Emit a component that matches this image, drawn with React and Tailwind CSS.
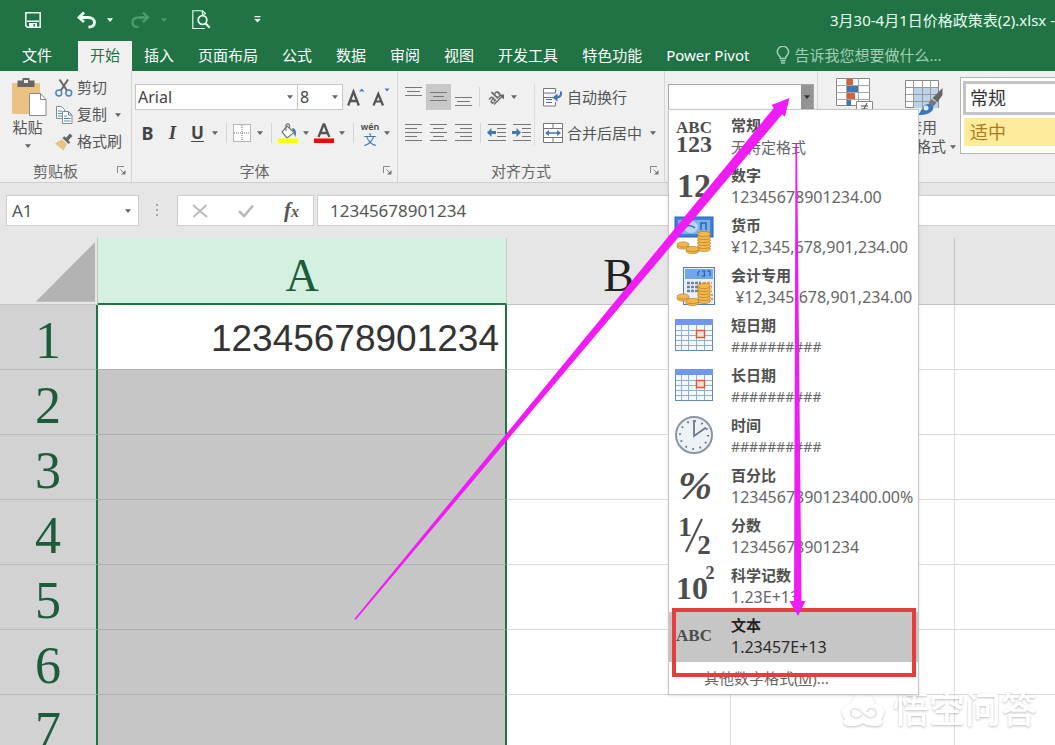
import React from "react";

const MAGENTA = "#f01cf5";

function Caret({ className = "text-[#666]" }) {
  return (
    <svg viewBox="0 0 8 5" className={"h-[4px] w-[6px] shrink-0 " + className} aria-hidden="true">
      <path d="M0 0h8L4 5z" fill="currentColor" />
    </svg>
  );
}

function CaretButton({ label, className = "w-2" }) {
  return (
    <button type="button" aria-label={label} className={"flex h-[26px] shrink-0 items-center justify-center " + className}>
      <Caret />
    </button>
  );
}

function Sep({ className = "w-3" }) {
  return (
    <span className={"flex h-5 shrink-0 justify-center " + className}>
      <span className="w-px bg-[#d4d4d4]" />
    </span>
  );
}

function TitleBar() {
  return (
    <header className="flex h-[41px] shrink-0 items-center justify-between bg-[#217346] pb-[2px] text-[#e9fff3]">
      <div className="flex items-center pl-[25px]">
        <button type="button" aria-label="保存">
          <svg viewBox="0 0 16 16" className="h-4 w-4" aria-hidden="true">
            <path d="M.8.8h14.400v14.400H2.300L.8 13.700z" fill="none" stroke="currentColor" strokeWidth="1.600" />
            <path d="M2 8.500h12v1.500H2zM4 11h8v4.500h-2V12H8.500v3.500H4z" fill="currentColor" />
          </svg>
        </button>
        <button type="button" aria-label="撤消" className="ml-9">
          <svg viewBox="0 0 19 18" className="h-[18px] w-[19px]" aria-hidden="true">
            <path d="M7 1.500 2 6.500l5 4.500M2.500 6.500H11c4 0 6.500 2 6.500 5s-2.500 4.500-6 4.500" fill="none" stroke="currentColor" strokeWidth="2.800" />
          </svg>
        </button>
        <button type="button" aria-label="撤消选项" className="ml-[11px]"><Caret className="text-white" /></button>
        <button type="button" aria-label="恢复" className="ml-[18px] text-[#4d9a6f]">
          <svg viewBox="0 0 19 18" className="h-[18px] w-[19px]" aria-hidden="true">
            <path d="m12 1.500 5 5-5 4.500M16.500 6.500H8c-4 0-6.500 2-6.500 5S4 16 7.500 16" fill="none" stroke="currentColor" strokeWidth="2.400" />
          </svg>
        </button>
        <button type="button" aria-label="恢复选项" className="ml-[11px]"><Caret className="text-[#4d9a6f]" /></button>
        <button type="button" aria-label="打印预览" className="ml-[25px]">
          <svg viewBox="0 0 19 20" className="h-5 w-[19px]" aria-hidden="true">
            <path d="M13.500 4V3.500L10.500.8H.8v17.700h12M10.300.8v3.500h3" fill="none" stroke="currentColor" strokeWidth="1.100" />
            <circle cx="10.500" cy="10" r="4.300" fill="none" stroke="currentColor" strokeWidth="1.700" />
            <path d="m13.500 13.300 4.200 4.500" stroke="currentColor" strokeWidth="2.200" />
          </svg>
        </button>
        <button type="button" aria-label="自定义快速访问工具栏" className="ml-[43px]">
          <svg viewBox="0 0 7 7" className="h-[7px] w-[7px]" aria-hidden="true">
            <path d="M.5 0h6v1.200h-6zM.2 3h6.600L3.500 6.500z" fill="currentColor" />
          </svg>
        </button>
      </div>
      <h1 className="whitespace-nowrap text-[15px] leading-6">3月30-4月1日价格政策表(2).xlsx -</h1>
    </header>
  );
}

const TABS = ["插入", "页面布局", "公式", "数据", "审阅", "视图", "开发工具", "特色功能", "Power Pivot"];

function Tabs() {
  return (
    <nav className="flex h-[30px] shrink-0 items-stretch bg-[#217346] text-[15px] leading-[26px] text-white">
      <button type="button" className="w-[78px] pb-[2px] pr-1 text-center">文件</button>
      <button type="button" className="bg-[#f0f0f0] px-3 pb-[2px] text-[#217346]">开始</button>
      {TABS.map((t) => (
        <button type="button" key={t} className="whitespace-nowrap px-3 pb-[2px]">{t}</button>
      ))}
      <button type="button" className="flex items-center gap-1 whitespace-nowrap pb-[2px] pl-[15px] text-[#a3cdb5]">
        <svg viewBox="0 0 14 18" className="h-[18px] w-[14px]" aria-hidden="true">
          <path d="M4.500 12.500c0-2.500-3.200-3.500-3.200-6.500a5.600 5.600 0 0 1 11.300 0c0 3-3.200 4-3.200 6.500zM4.500 14.800h5M5 17h4" fill="none" stroke="currentColor" strokeWidth="1.500" />
        </svg>
        告诉我您想要做什么...
      </button>
    </nav>
  );
}

function Group({ label, className, children }) {
  return (
    <section className={"flex shrink-0 flex-col justify-between " + className}>
      {children}
      <footer className="flex h-[23px] items-center">
        <span className="flex-1 text-center text-[15px] leading-[22px] text-[#666]">{label}</span>
        <button type="button" aria-label={label + "设置"} className="flex w-5 justify-center">
          <svg viewBox="0 0 9 9" className="h-[9px] w-[9px]" aria-hidden="true">
            <path d="M.5 7V.5H7M3.500 3.500 7.500 7.500" fill="none" stroke="#888" />
            <path d="M8.500 4v4.500H4z" fill="#777" />
          </svg>
        </button>
      </footer>
    </section>
  );
}

function ClipboardGroup() {
  return (
    <Group label="剪贴板" className="w-[132px] border-r border-[#d6d6d6]">
      <div className="flex pt-[3px] text-[15px] text-[#555]">
        <button type="button" className="flex w-[55px] flex-col items-center pt-1 leading-[22px]">
          <svg viewBox="0 0 35 38" className="ml-1 h-[38px] w-[35px]" aria-hidden="true">
            <rect x="0" y="5" width="28" height="31" rx="1" fill="#eac282" />
            <path d="M5.500 2.500h5V0h7v2.500h5V9h-17z" fill="#666" />
            <rect x="12" y="2" width="4" height="3" fill="#eee" />
            <path d="M17.500 15.500h11l5.500 6v16H17.500z" fill="#fff" stroke="#888" />
            <path d="M28.500 15.500v6H34" fill="none" stroke="#888" />
          </svg>
          粘贴
          <span className="flex h-4 items-center"><Caret /></span>
        </button>
        <div className="flex flex-col">
          <button type="button" className="flex h-[27px] items-center gap-1 whitespace-nowrap">
            <svg viewBox="0 0 18 18" className="h-[18px] w-[18px]" aria-hidden="true">
              <path d="M4.500.5 12.300 12M13 .5 5.500 12" stroke="#666" strokeWidth="2" />
              <circle cx="3.800" cy="14" r="2.900" fill="none" stroke="#4a86c5" strokeWidth="1.500" />
              <circle cx="13.800" cy="14" r="2.900" fill="none" stroke="#4a86c5" strokeWidth="1.500" />
            </svg>
            剪切
          </button>
          <button type="button" className="flex h-[27px] items-center gap-1 whitespace-nowrap">
            <svg viewBox="0 0 18 18" className="h-[18px] w-[18px]" aria-hidden="true">
              <path d="M1.500.5h5l3 3v9h-8z" fill="#fff" stroke="#888" />
              <path d="M3 5h4M3 7.500h4M3 10h4" stroke="#4a86c5" />
              <path d="M7.500 5.500h6l3.500 3.500v8.500H7.500z" fill="#fff" stroke="#888" />
              <path d="M13.500 5.500V9H17M9 10h3M9 12.500h6.500M9 15h6.500" fill="none" stroke="#4a86c5" />
            </svg>
            复制
            <span className="pl-1"><Caret /></span>
          </button>
          <button type="button" className="flex h-[27px] items-center gap-1 whitespace-nowrap">
            <svg viewBox="0 0 18 18" className="h-[18px] w-[18px]" aria-hidden="true">
              <path d="M0 10.500 7 6l5 5-3.500 6.500L5.500 15z" fill="#eac282" />
              <path d="m7.500 5 6 6 1.800-1.800-2-2L17.500 3 15 .5l-4 4.200-1.600-1.500z" fill="#666" />
            </svg>
            格式刷
          </button>
        </div>
      </div>
    </Group>
  );
}

function FontGroup() {
  const btn = "flex h-[26px] shrink-0 items-center justify-center ";
  return (
    <Group label="字体" className="w-[266px] border-r border-[#d6d6d6]">
      <div className="flex flex-col gap-[10px] pl-[3px] pt-[13px]">
        <div className="flex h-[26px] items-center text-[#444]">
          <div className="flex h-[26px] w-[163px] items-center border border-[#c6c6c6] bg-white pr-[3px]">
            <input aria-label="字体名称" defaultValue="Arial" className="min-w-0 flex-1 bg-transparent pl-[2px] text-base outline-none" />
            <CaretButton label="字体列表" />
          </div>
          <div className="-ml-px flex h-[26px] w-[46px] items-center border border-[#c6c6c6] bg-white pr-[3px]">
            <input aria-label="字号" defaultValue="8" className="min-w-0 flex-1 bg-transparent pl-[2px] text-base outline-none" />
            <CaretButton label="字号列表" />
          </div>
          <button type="button" aria-label="增大字号" className={btn + "w-[25px]"}>
            <svg viewBox="0 0 18 20" className="h-5 w-[18px]" aria-hidden="true">
              <path d="M1.200 18.500 6.500 4.500l5.300 14M3.200 14h6.600" fill="none" stroke="#555" strokeWidth="2.300" />
              <path d="M12 4.500 14.700 1.500l2.800 3z" fill="#4a7fb8" />
            </svg>
          </button>
          <button type="button" aria-label="减小字号" className={btn + "w-[25px]"}>
            <svg viewBox="0 0 18 20" className="h-5 w-[18px]" aria-hidden="true">
              <path d="M1.500 18.500 6.300 7l4.700 11.500M3.200 14.500h6" fill="none" stroke="#555" strokeWidth="2.200" />
              <path d="M12.500 1.500h5l-2.500 3z" fill="#4a7fb8" />
            </svg>
          </button>
        </div>
        <div className="flex h-[26px] items-center text-[#444]">
          <button type="button" className={btn + "w-[25px] text-lg font-bold"}>B</button>
          <button type="button" className={btn + "w-[25px] font-[Liberation_Serif] text-[19px] font-bold italic"}>I</button>
          <button type="button" className={btn + "w-[25px] text-[17px] font-bold underline underline-offset-2"}>U</button>
          <CaretButton label="下划线选项" className="w-[10px]" />
          <Sep />
          <button type="button" aria-label="边框" className={btn + "w-5"}>
            <svg viewBox="0 0 18 18" className="h-[18px] w-[18px]" aria-hidden="true">
              <path d="M.5.5h17v17H.5z" fill="#fff" stroke="#777" strokeDasharray="1 1" />
              <path d="M9 1v16M1 9h16" stroke="#777" strokeDasharray="1 1" />
            </svg>
          </button>
          <CaretButton label="边框选项" className="w-4" />
          <Sep className="w-[6px]" />
          <button type="button" aria-label="填充颜色" className={btn + "w-7"}>
            <svg viewBox="0 0 20 20" className="h-5 w-5" aria-hidden="true">
              <path d="M15 5c3 1 3.500 5 2.500 9-1.500-2-1.500-5-3.500-8z" fill="#3f76b3" />
              <path d="m9 3 7 6.500-7 5.500-5-6z" fill="#fff" stroke="#777" strokeWidth="1.200" />
              <path d="M8 8V2a2 2 0 0 1 3.500 0v3" fill="none" stroke="#777" strokeWidth="1.200" />
              <path d="M0 15.500h20V20H0z" fill="#ff0" />
            </svg>
          </button>
          <CaretButton label="填充颜色选项" />
          <button type="button" aria-label="字体颜色" className={btn + "w-7"}>
            <svg viewBox="0 0 20 20" className="h-5 w-5" aria-hidden="true">
              <path d="m4.500 14 5-12.500h.8l5 12.500M6 10h8" fill="none" stroke="#555" strokeWidth="2.300" />
              <path d="M0 15.500h20V20H0z" fill="#f00" />
            </svg>
          </button>
          <CaretButton label="字体颜色选项" />
          <Sep className="w-[14px]" />
          <button type="button" aria-label="拼音" className="flex h-[26px] w-5 shrink-0 flex-col items-center justify-center">
            <span className="text-[9px] font-semibold leading-[11px]">wén</span>
            <span className="text-[13px] leading-[14px] text-[#3f76b3]">文</span>
          </button>
          <CaretButton label="拼音选项" className="w-[14px]" />
        </div>
      </div>
    </Group>
  );
}

function Lines({ rows, label, active }) {
  return (
    <button type="button" aria-label={label} className={"flex h-[26px] w-[25px] shrink-0 items-center justify-center " + (active ? "bg-[#c8c8c8]" : "")}>
      <svg viewBox="0 0 17 20" className="h-5 w-[17px]" aria-hidden="true">
        {rows.map(([x, y, w]) => (
          <path key={y} d={`M${x} ${y + 0.5}h${w}`} stroke="#777" />
        ))}
      </svg>
    </button>
  );
}

function Indent({ flip, label }) {
  return (
    <button type="button" aria-label={label} className="flex h-[26px] w-[25px] shrink-0 items-center justify-center">
      <svg viewBox="0 0 19 20" className="h-5 w-[19px]" aria-hidden="true">
        <path d="M1 1.500h18M10 5.500h9M10 9.500h9M10 13.500h9M1 17.500h18" stroke="#777" />
        <path d={flip ? "M9 9.500 4.500 5v3H0v3h4.500v3z" : "M0 9.500 4.500 5v3H9v3H4.500v3z"} fill="#3f76b3" />
      </svg>
    </button>
  );
}

function AlignGroup() {
  return (
    <Group label="对齐方式" className="w-[267px] border-r border-[#d6d6d6]">
      <div className="flex pt-[13px]">
        <div className="flex w-[139px] flex-col gap-[10px] pl-[3px]">
          <div className="flex h-[26px] items-center">
            <Lines label="顶端对齐" rows={[[0, 0, 17], [2, 4, 13], [0, 8, 17]]} />
            <Lines label="垂直居中" active rows={[[0, 5, 17], [3, 9, 11], [0, 13, 17]]} />
            <Lines label="底端对齐" rows={[[0, 10, 17], [2, 14, 13], [0, 18, 17]]} />
            <Sep className="w-[6px]" />
            <button type="button" aria-label="方向" className="flex h-[26px] w-7 items-center justify-center">
              <svg viewBox="0 0 20 20" className="h-5 w-5 overflow-visible" aria-hidden="true">
                <text x="1" y="14" transform="rotate(-45 8 10)" fontSize="12" fontWeight="600" fill="#666" fontFamily="Noto Sans">ab</text>
                <path d="m8 17.500 9-9" stroke="#666" strokeWidth="1.300" />
                <path d="M13 7.500h5v5z" fill="#666" />
              </svg>
            </button>
            <CaretButton label="方向选项" />
          </div>
          <div className="flex h-[26px] items-center">
            <Lines label="左对齐" rows={[[0, 1, 17], [0, 5, 12], [0, 9, 17], [0, 13, 12], [0, 17, 17]]} />
            <Lines label="居中" rows={[[0, 1, 17], [3, 5, 11], [0, 9, 17], [3, 13, 11], [0, 17, 17]]} />
            <Lines label="右对齐" rows={[[0, 1, 17], [5, 5, 12], [0, 9, 17], [5, 13, 12], [0, 17, 17]]} />
            <Sep className="w-[8px]" />
            <Indent label="减少缩进量" />
            <Indent label="增加缩进量" flip />
          </div>
        </div>
        <span className="h-[62px] w-px bg-[#dcdcdc]" />
        <div className="flex flex-col gap-[10px] pl-2 text-[15px] text-[#555]">
          <button type="button" className="flex h-[26px] items-center gap-1 whitespace-nowrap">
            <svg viewBox="0 0 20 19" className="h-[19px] w-5" aria-hidden="true">
              <path d="M.5.500h12v4.500H.5zM.5 5v13h12v-4M1 9.500h9" fill="#fff" stroke="#777" />
              <path d="M3 11.500h6M3 14.500h6" stroke="#3f76b3" />
              <path d="M13 9.500c4 0 5.500-2 5-6" fill="none" stroke="#3f76b3" strokeWidth="2" />
              <path d="M14.500 5.500v8L9.500 9.500z" fill="#3f76b3" />
            </svg>
            自动换行
          </button>
          <div className="flex items-center">
            <button type="button" className="flex h-[26px] items-center gap-1 whitespace-nowrap">
              <svg viewBox="0 0 20 20" className="h-5 w-5" aria-hidden="true">
                <path d="M.5.5h19v19H.5zM.5 5.500h19M.5 14.500h19M10 .5v5M10 14.500v5" fill="#fff" stroke="#777" />
                <path d="M4 10h12" stroke="#3f76b3" strokeWidth="1.500" />
                <path d="m2 10 4-3v6zM18 10l-4-3v6z" fill="#3f76b3" />
              </svg>
              合并后居中
            </button>
            <CaretButton label="合并选项" className="w-[22px]" />
          </div>
        </div>
      </div>
    </Group>
  );
}

function T({ x, y, s, children, italic }) {
  return (
    <text x={x} y={y} fontSize={s} fontWeight="700" fontStyle={italic ? "italic" : "normal"} fontFamily="Liberation Serif" textAnchor="middle" fill="#4d4d4d">
      {children}
    </text>
  );
}

function Coins() {
  const stack = [35, 32, 29, 26, 23, 20];
  return (
    <g fill="#f0b84e" stroke="#b97c1c" strokeWidth=".7">
      {stack.map((y) => <ellipse key={y} cx="30" cy={y} rx="6.500" ry="2.600" />)}
      <ellipse cx="9" cy="32.500" rx="6" ry="2.600" />
      <ellipse cx="9" cy="30.500" rx="6" ry="2.600" />
      <ellipse cx="18.500" cy="37" rx="6.500" ry="2.600" />
      <ellipse cx="18.500" cy="35" rx="6.500" ry="2.600" />
    </g>
  );
}

function CalendarArt() {
  return (
    <g>
      <rect x="1.500" y="5.500" width="37" height="31" fill="#f3f9ff" stroke="#6887b4" />
      <path d="M1 5h38v6H1z" fill="#6f97ee" />
      <path d="M2 16.500h36M2 21.500h36M2 26.500h36M2 31.500h36M7.500 11v25M14.500 11v25M22.500 11v25M30.500 11v25" stroke="#8fb0d0" />
      <rect x="22.500" y="16.500" width="8" height="7" fill="#fbe3da" stroke="#e4572e" strokeWidth="1.500" />
    </g>
  );
}

const ART = {
  general: <><T x="20" y="19" s="17">ABC</T><T x="20" y="38" s="24">123</T></>,
  number: <T x="20" y="33" s="34">12</T>,
  currency: (
    <>
      <rect x="1" y="3" width="38" height="20" fill="#3f7fd8" stroke="#2f62b0" />
      <rect x="4" y="6" width="32" height="14" fill="#7db0f0" />
      <ellipse cx="17" cy="13" rx="7" ry="6" fill="#b9d6f8" />
      <path d="M8 17q5-9 13-3M27 16V9h5v7" stroke="#2f62b0" strokeWidth="1.500" fill="none" />
      <Coins />
    </>
  ),
  accounting: (
    <g transform="translate(0 2)">
      <rect x="9.500" y="1.500" width="31" height="37" fill="#e8f1fc" stroke="#4a7fd0" />
      <path d="M11 3h28v10H11z" fill="#70a6ee" />
      <path d="M24 10V6l2-1M28 5h3l-1 2 1 3h-3M33 5h3v5" stroke="#224f9a" fill="none" />
      <path d="M13 17h14M13 21h14M13 25h14" stroke="#6f83a0" strokeWidth="2.500" strokeDasharray="3 1" />
      <path d="M29 17h9M29 21h9M29 25h9M37 29h2M37 33h2" stroke="#ee9a5a" strokeWidth="2.500" strokeDasharray="3 1" />
      <Coins />
    </g>
  ),
  calendar: <CalendarArt />,
  clock: (
    <>
      <circle cx="20" cy="21" r="18" fill="#edf2f7" stroke="#8a96a3" strokeWidth="2" />
      <circle cx="20" cy="21" r="14" fill="none" stroke="#5a6a7d" strokeWidth="2" strokeDasharray="1.500 5.830" />
      <path d="M20 6v16L32 13.500" fill="none" stroke="#6b7a8c" strokeWidth="1.800" />
    </>
  ),
  percent: <T x="21" y="35" s="41" italic>%</T>,
  fraction: <><T x="11" y="22" s="27">1</T><path d="M28 5 12 38" stroke="#4d4d4d" strokeWidth="2" /><T x="30" y="40" s="27">2</T></>,
  scientific: <><T x="18" y="35" s="32">10</T><T x="36" y="15" s="18">2</T></>,
  text: <T x="20" y="27" s="17">ABC</T>,
};

const FORMATS = [
  ["常规", "无特定格式", "general"],
  ["数字", "12345678901234.00", "number"],
  ["货币", "¥12,345,678,901,234.00", "currency"],
  ["会计专用", " ¥12,345,678,901,234.00", "accounting"],
  ["短日期", "##########", "calendar"],
  ["长日期", "##########", "calendar"],
  ["时间", "##########", "clock"],
  ["百分比", "1234567890123400.00%", "percent"],
  ["分数", "12345678901234", "fraction"],
  ["科学记数", "1.23E+13", "scientific"],
  ["文本", "1.23457E+13", "text"],
];

function sampleSize(sample) {
  if (sample.startsWith("#")) return "text-sm leading-[22px]";
  if (sample.startsWith("无")) return "text-[15px] leading-[22px]";
  return "text-base leading-[22px]";
}

function FormatMenu() {
  return (
    <div className="absolute -left-px top-full z-10 w-[251px] border border-[#c6c6c6] bg-white pt-[2px] shadow-sm">
      <ul>
        {FORMATS.map(([name, sample, art]) => {
          const selected = art === "text";
          return (
            <li key={name}>
              <button type="button" className={"flex h-[50px] w-full items-start pl-[5px] pt-[2px] text-left " + (selected ? "bg-[#c6c6c6] text-[#2b2b2b]" : "text-[#666]")}>
                <svg viewBox="0 0 42 42" className="h-[42px] w-[42px] shrink-0 overflow-visible" aria-hidden="true">{ART[art]}</svg>
                <span className="flex flex-col whitespace-pre pl-[15px]">
                  <span className={"text-[15px] font-bold leading-[22px] " + (selected ? "text-[#222]" : "text-[#505050]")}>{name}</span>
                  <span className={sampleSize(sample)}>{sample}</span>
                </span>
              </button>
            </li>
          );
        })}
      </ul>
      <button type="button" className="h-8 w-full pl-[35px] text-left text-[15px] text-[#666]">
        其他数字格式(<span className="underline">M</span>)...
      </button>
      <span className="pointer-events-none absolute left-[3px] top-[498px] h-[69px] w-[244px] border-4 border-[#e23f3f]" />
    </div>
  );
}

function NumberGroup() {
  return (
    <section className="w-[153px] shrink-0 border-r border-[#d6d6d6] pl-[3px] pt-[13px]">
      <div className="relative flex h-[26px] w-[146px] border border-[#a6a6a6] bg-white">
        <input aria-label="数字格式" className="min-w-0 flex-1 bg-transparent px-1 outline-none" />
        <button type="button" aria-label="数字格式列表" className="flex w-3 items-center justify-center bg-[#949494]">
          <Caret className="text-[#333]" />
        </button>
        <FormatMenu />
      </div>
    </section>
  );
}

function StylesGroup() {
  return (
    <section className="flex min-w-0 flex-1 items-start">
      <button type="button" aria-label="条件格式" className="ml-[18px] mt-[7px] shrink-0">
        <svg viewBox="0 0 37 34" className="h-[34px] w-[37px]" aria-hidden="true">
          <path d="M.5.5h33v27H.5z" fill="#fff" stroke="#888" />
          <path d="M.5 7.500h33M.5 14.500h33M.5 21.500h33M10.500.5v27M22.500.5v27" stroke="#a8a8a8" />
          <path d="M11 1h6v6h-6zM11 15h8v6h-8z" fill="#d9603b" />
          <path d="M11 8h11v6H11zM11 22h4v6h-4z" fill="#3f76b3" />
          <path d="M20.500 23.500h16v10h-16z" fill="#fff" stroke="#888" />
          <path d="M25 28h7M25 31h7M31 25l-4 8" stroke="#444" />
        </svg>
      </button>
      <button type="button" className="ml-3 mr-1 mt-[9px] flex w-[71px] shrink-0 flex-col items-end text-right text-[15px] leading-[19px] text-[#555]">
        <svg viewBox="0 0 38 38" className="mr-[13px] h-[38px] w-[38px]" aria-hidden="true">
          <path d="M.5.5h33v27H.5z" fill="#fff" stroke="#888" />
          <path d="M9 7h24v21H9z" fill="#bdd3ea" />
          <path d="M.5 7.500h33M.5 14.500h33M.5 21.500h33M8.500.5v27M17.500.5v27M25.500.5v27" stroke="#999" fill="none" />
          <path d="M37.500 8v7l-5 7-5-4z" fill="#666" />
          <path d="m26.500 19 5 4-3 3-5-3z" fill="#777" />
          <path d="M23 24c5-1 7 4 4 7-4 4-9 4-14 4 4-4 4-10 10-11z" fill="#3f76b3" />
          <circle cx="21" cy="28" r="2.500" fill="#dbe9f7" />
        </svg>
        <span className="pr-[19px]">套用</span>
        <span className="flex items-center gap-1 whitespace-nowrap">表格格式<Caret /></span>
      </button>
      <div className="mt-[6px] flex h-[77px] min-w-0 flex-1 flex-col border border-r-0 border-[#b5b5b5] bg-white pl-[2px] pt-[3px] text-lg">
        <button type="button" className="h-[34px] border-[3px] border-r-0 border-[#c3c3c3] pl-1 text-left leading-[24px] text-[#333]">常规</button>
        <button type="button" className="ml-[1px] mt-[3px] h-7 bg-[#ffeb9c] pl-[6px] text-left leading-6 text-[#b07a1c]">适中</button>
      </div>
    </section>
  );
}

function FormulaBar() {
  return (
    <div className="flex h-[55px] shrink-0 items-start bg-[#e6e6e6] pl-[6px] pt-3 text-[#555]">
      <div className="flex h-[31px] w-[133px] shrink-0 items-center border border-[#cfcfcf] bg-white pr-[6px]">
        <input aria-label="名称框" defaultValue="A1" className="min-w-0 flex-1 bg-transparent pl-[5px] text-[17px] outline-none" />
        <CaretButton label="名称列表" />
      </div>
      <svg viewBox="0 0 38 31" className="h-[31px] w-[38px] shrink-0" aria-hidden="true">
        <path d="M17 9h2v2h-2zM17 14h2v2h-2zM17 19h2v2h-2z" fill="#aaa" />
      </svg>
      <div className="flex h-[31px] w-[137px] shrink-0 items-center justify-between border border-[#cfcfcf] bg-white px-[14px]">
        <button type="button" aria-label="取消">
          <svg viewBox="0 0 16 14" className="h-[14px] w-4" aria-hidden="true"><path d="m1 1 14 12M14.500 1 1.500 13" stroke="#bbb" strokeWidth="2" /></svg>
        </button>
        <button type="button" aria-label="输入">
          <svg viewBox="0 0 16 14" className="h-[14px] w-4" aria-hidden="true"><path d="m1 7 5 5 9-10.500" fill="none" stroke="#bbb" strokeWidth="2.600" /></svg>
        </button>
        <button type="button" aria-label="插入函数" className="font-[Liberation_Serif] text-[21px] font-bold italic leading-6">
          f<span className="text-base">x</span>
        </button>
      </div>
      <input aria-label="编辑栏" defaultValue="12345678901234" className="ml-[3px] h-[31px] min-w-0 flex-1 border border-r-0 border-[#cfcfcf] bg-white pl-3 text-[17px] outline-none" />
    </div>
  );
}

const ROWS = [1, 2, 3, 4, 5, 6, 7];

function Sheet() {
  return (
    <table className="w-full table-fixed border-separate border-spacing-0">
      <colgroup>
        <col className="w-[98px]" />
        <col className="w-[409px]" />
        <col className="w-[224px]" />
        <col className="w-[224px]" />
        <col />
      </colgroup>
      <thead>
        <tr className="h-[67px] font-[Liberation_Serif] text-[46px]">
          <th aria-label="全选" className="border-b border-r border-[#c2c2c2] bg-[#e6e6e6] p-0">
            <svg viewBox="0 0 98 66" className="block h-[66px] w-[97px]" aria-hidden="true"><path d="M96 4v60H36z" fill="#b3b3b3" /></svg>
          </th>
          <th className="border-b-2 border-r border-b-[#217346] border-r-[#b9d3c5] bg-[#d3f0e0] p-0 pt-[10px] font-normal leading-[54px] text-[#1c5c3a]">A</th>
          <th className="border-b border-r border-[#c2c2c2] bg-[#e6e6e6] p-0 pt-[10px] font-normal leading-[54px] text-[#222]">B</th>
          <th className="border-b border-r border-[#c2c2c2] bg-[#e6e6e6] p-0" />
          <th className="border-b border-[#c2c2c2] bg-[#e6e6e6] p-0" />
        </tr>
      </thead>
      <tbody>
        {ROWS.map((n) => (
          <tr key={n} className="h-[65px]">
            <th className="border-b border-r-2 border-b-[#b8b8b8] border-r-[#217346] bg-[#d2d2d2] p-0 pt-2 font-[Liberation_Serif] text-[52px] font-normal leading-[56px] text-[#1c5c3a]">{n}</th>
            <td className={"border-b border-r-2 border-b-[#afafaf] border-r-[#217346] p-0 pr-[6px] pt-1 text-right font-[Liberation_Sans] text-[37px] leading-[60px] text-[#333] " + (n === 1 ? "bg-white" : "bg-[#c6c6c6]")}>
              {n === 1 ? "12345678901234" : ""}
            </td>
            <td className="border-b border-r border-[#dadada] bg-white p-0" />
            <td className="border-b border-r border-[#dadada] bg-white p-0" />
            <td className="border-b border-[#dadada] bg-white p-0" />
          </tr>
        ))}
      </tbody>
    </table>
  );
}

function Arrows() {
  return (
    <svg viewBox="0 0 1055 745" className="pointer-events-none absolute left-0 top-0 z-20 h-[745px] w-[1055px]" aria-hidden="true">
      <path d="M354.500 618.800 773.800 108 771.500 105 789.500 98 785 116.500 782 114.500 355.800 619.800z" fill={MAGENTA} />
      <path d="M795.500 143h1.500L801.500 601h4L798 616 789.500 601h4.500z" fill={MAGENTA} />
    </svg>
  );
}

function Watermark() {
  return (
    <div className="pointer-events-none absolute bottom-[13px] right-[18px] flex items-center gap-2 text-white drop-shadow-[0_1px_1px_rgba(0,0,0,0.25)]">
      <svg viewBox="0 0 44 36" className="h-9 w-11" aria-hidden="true">
        <path d="M1 18C3 13 8 12 10 12 12 5 16 1 22 1s10 4 12 11c2 0 7 1 9 6 0 5-1 7-3 9 3 3 1 7-4 7-6 0-10 0-14-3-4 3-8 3-14 3-5 0-7-4-4-7-2-2-3-4-3-9z" fill="currentColor" />
        <path d="M21 23c-2 4-10 4-11-1-1-6 6-7 10-2l4 3c3 4 10 4 11-1 1-6-7-7-9-2" fill="none" stroke="#e6e6e6" strokeWidth="2" />
      </svg>
      <span className="text-4xl font-medium leading-[44px]">悟空问答</span>
    </div>
  );
}

export default function App() {
  return (
    <div className="relative flex h-screen flex-col overflow-hidden bg-white font-['Noto_Sans','Noto_Sans_CJK_SC',sans-serif]">
      <TitleBar />
      <Tabs />
      <div className="flex h-[112px] shrink-0 border-b border-[#cfcfcf] bg-[#f0f0f0]">
        <ClipboardGroup />
        <FontGroup />
        <AlignGroup />
        <NumberGroup />
        <StylesGroup />
      </div>
      <FormulaBar />
      <main className="min-h-0 flex-1 overflow-hidden">
        <Sheet />
      </main>
      <Watermark />
      <Arrows />
    </div>
  );
}
